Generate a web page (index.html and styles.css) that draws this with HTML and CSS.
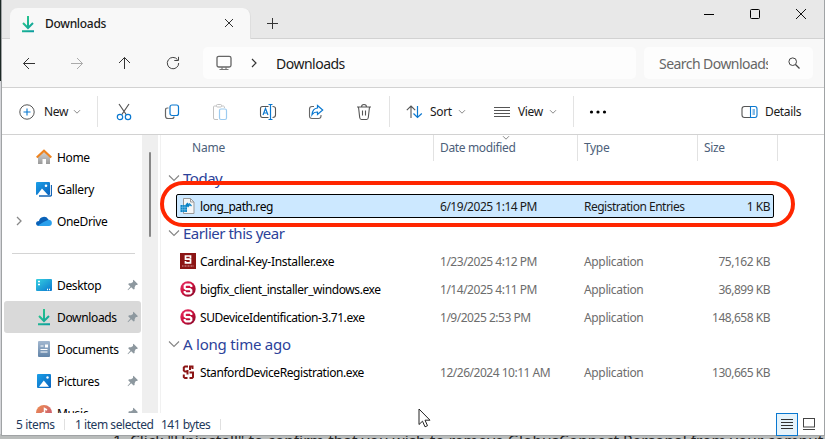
FILE: index.html
```html
<!DOCTYPE html>
<html lang="en">
<head>
<meta charset="utf-8">
<title>Downloads</title>
<link rel="stylesheet" href="styles.css">
</head>
<body>
<svg width="0" height="0" class="defs">
  <defs>
    <linearGradient id="dl" x1="0" y1="0" x2="1" y2="1"><stop offset="0" stop-color="#2fcf87"/><stop offset="1" stop-color="#0b9ba0"/></linearGradient>
    <linearGradient id="blue" x1="0" y1="0" x2="1" y2="1"><stop offset="0" stop-color="#1aa0e8"/><stop offset="1" stop-color="#0a62bd"/></linearGradient>
    <linearGradient id="desk" x1="0" y1="0" x2="1" y2="1"><stop offset="0" stop-color="#35d0e0"/><stop offset="1" stop-color="#0b78d0"/></linearGradient>
    <linearGradient id="doc" x1="0" y1="0" x2="0" y2="1"><stop offset="0" stop-color="#a3b8d0"/><stop offset="1" stop-color="#6284a8"/></linearGradient>
    <linearGradient id="mus" x1="0" y1="0" x2="1" y2="1"><stop offset="0" stop-color="#f09050"/><stop offset="1" stop-color="#c05078"/></linearGradient>
    <linearGradient id="wall" x1="0" y1="0" x2="0" y2="1"><stop offset="0" stop-color="#d8d8d8"/><stop offset="1" stop-color="#9a9a9a"/></linearGradient>
    <linearGradient id="badge" x1="0" y1="0" x2="1" y2="1"><stop offset="0" stop-color="#f03068"/><stop offset=".5" stop-color="#c8103c"/><stop offset="1" stop-color="#800828"/></linearGradient>
    <symbol id="arrow-down" viewBox="0 0 16 18"><path d="M7 1V13M2 8L7 13L12 8M1 16.3H13" fill="none" stroke="url(#dl)" stroke-width="2"/></symbol>
    <symbol id="chev" viewBox="0 0 8 6"><path d="M1 1.2L4 4.2L7 1.2" fill="none" stroke="#8a8a8a" stroke-width="1"/></symbol>
    <symbol id="fold" viewBox="0 0 12 8"><path d="M1 1.5L6 6.5L11 1.5" fill="none" stroke="#858585" stroke-width="1.1"/></symbol>
    <symbol id="pin" viewBox="0 0 12 12"><path d="M6.5 .8L11 5.2L9.8 6L8.8 6L7.6 8.2V10L6.6 10.6L4.2 8.3L1 11.2L.6 10.8L3.4 7.5L1.2 5.2L2 4.3H4L6 3V1.6Z" fill="#8d989f"/></symbol>
    <symbol id="seal" viewBox="0 0 16 16"><circle cx="8" cy="8" r="7.7" fill="url(#badge)"/><path d="M11.3 6V4.7L10 3.6H6L4.7 4.7V7L6 8.2H10L11.3 9.3V11.2L10 12.4H6L4.7 11.2V9.9" fill="none" stroke="#fff" stroke-width="2.2"/></symbol>
  </defs>
</svg>
<div class="backdrop">
<main class="window">
  <header class="titlebar">
    <div class="tab">
      <svg class="tab-icon" width="16" height="18"><use href="#arrow-down"/></svg>
      <span class="tab-label">Downloads</span>
      <svg class="tab-close" width="10" height="10" viewBox="0 0 10 10"><path d="M1 1L9 9M9 1L1 9" stroke="#333" fill="none"/></svg>
    </div>
    <svg class="tab-add" width="11" height="11" viewBox="0 0 11 11"><path d="M5.5 0V11M0 5.5H11" stroke="#333" fill="none"/></svg>
    <div class="controls">
      <svg width="12" height="12" viewBox="0 0 12 12"><path d="M1 6.5H11" stroke="#000"/></svg>
      <svg width="12" height="12" viewBox="0 0 12 12"><rect x="1.5" y="1.5" width="9" height="9" rx="1" fill="none" stroke="#000"/></svg>
      <svg width="12" height="12" viewBox="0 0 12 12"><path d="M1 1L11 11M11 1L1 11" stroke="#111"/></svg>
    </div>
  </header>

  <nav class="navbar">
    <svg width="14" height="14" viewBox="0 0 14 14"><path d="M13 7.500H1.500M7 2L1.500 7.500L7 13" stroke="#333" fill="none"/></svg>
    <svg width="14" height="14" viewBox="0 0 14 14"><path d="M1 7.500H12.500M7 2L12.500 7.500L7 13" stroke="#aaa" fill="none"/></svg>
    <svg width="14" height="14" viewBox="0 0 14 14"><path d="M6.500 13V1.500M1 7L6.500 1.500L12 7" stroke="#333" fill="none"/></svg>
    <svg width="14" height="14" viewBox="0 0 14 14"><path d="M11.500 3.600A5.700 5.700 0 1 0 12.700 7M8.300 4.500H12.500V.8" stroke="#444" fill="none"/></svg>
    <div class="address">
      <svg width="16" height="16" viewBox="0 0 16 16"><rect x="1" y="1.300" width="14" height="10.700" rx="1.800" fill="none" stroke="#666" stroke-width="1.300"/><path d="M6 12V14M10 12V14M3.500 14.500H12.500" stroke="#777" stroke-width="1.200"/></svg>
      <svg class="crumb" width="6" height="10" viewBox="0 0 6 10"><path d="M1 1L5 5L1 9" fill="none" stroke="#333" stroke-width="1.200"/></svg>
      <span>Downloads</span>
    </div>
    <div class="search">
      <span>Search Downloads</span>
      <svg width="12" height="12" viewBox="0 0 12 12"><circle cx="4.700" cy="4.700" r="3.800" fill="none" stroke="#444"/><path d="M7.500 7.500L11.500 11.500" stroke="#444" stroke-width="1.200"/></svg>
    </div>
  </nav>

  <div class="toolbar">
    <svg width="16" height="16" viewBox="0 0 16 16"><circle cx="8" cy="8" r="7.200" fill="none" stroke="#555"/><path d="M8 4.500V11.500M4.500 8H11.500" stroke="#0a78d0" stroke-width="1.100"/></svg>
    <span>New</span>
    <svg class="drop" width="8" height="6"><use href="#chev"/></svg>
    <i class="rule"></i>
    <div class="actions">
      <svg width="16" height="18" viewBox="0 0 16 18"><path d="M3 1L10.500 12M13 1L5.500 12" stroke="#555" fill="none" stroke-width="1.200"/><circle cx="4" cy="14" r="2.700" fill="#fff" stroke="#0a78d0" stroke-width="1.200"/><circle cx="12" cy="14" r="2.700" fill="#fff" stroke="#0a78d0" stroke-width="1.200"/></svg>
      <svg width="16" height="18" viewBox="0 0 16 18"><path d="M4.500 5H3.500Q1.500 5 1.500 7V13Q1.500 15.500 4 15.500H8Q10 15.500 10 13.500" fill="none" stroke="#666" stroke-width="1.200"/><rect x="6" y="2" width="8.500" height="10.500" rx="2" fill="#fff" stroke="#0a78d0" stroke-width="1.200"/></svg>
      <svg width="16" height="18" viewBox="0 0 16 18"><path d="M4.500 3H2.500Q1.500 3 1.500 4V15Q1.500 16.500 3 16.500H6M9.500 3H11.500Q12.500 3 12.500 5" fill="none" stroke="#c2c2c2"/><rect x="4.500" y="1.500" width="5" height="2.500" rx="1" fill="none" stroke="#c2c2c2"/><rect x="7.500" y="6" width="7" height="10.500" rx="1.500" fill="#fff" stroke="#9ccbf0" stroke-width="1.200"/></svg>
      <svg width="18" height="18" viewBox="0 0 18 18"><path d="M9.500 3.500H3.500Q1.500 3.500 1.500 5.500V12Q1.500 14.500 3.500 14.500H9.500M13.500 3.500Q16.500 3.500 16.500 5.500V12Q16.500 14.500 13.500 14.500" fill="none" stroke="#555" stroke-width="1.100"/><path d="M4 12L6.500 5.500L9 12M4.800 10H8.200M11.500 1.500V16.500M9.500 1.500H13.500M9.500 16.500H13.500" stroke="#0a78d0" stroke-width="1.200" fill="none"/></svg>
      <svg width="16" height="18" viewBox="0 0 16 18"><path d="M6 3.500H4Q1.500 3.500 1.500 6V13Q1.500 15.500 4 15.500H10.500Q13 15.500 13 13V12" fill="none" stroke="#666" stroke-width="1.100"/><path d="M9.500 2.500L14.700 7L9.500 11.500V9Q6 8.800 4 11.700Q4.500 5.500 9.500 5Z" fill="#fff" stroke="#0a78d0" stroke-width="1.200"/></svg>
      <svg width="16" height="18" viewBox="0 0 16 18"><path d="M1 4H15M5.500 4Q5.500 1.500 8 1.500Q10.500 1.500 10.500 4M2.500 4L3.700 14.500Q3.900 16.500 5.500 16.500H10.500Q12.100 16.500 12.300 14.500L13.500 4M6.500 7.500V12.500M9.500 7.500V12.500" stroke="#555" fill="none" stroke-width="1.100"/></svg>
    </div>
    <i class="rule rule-b"></i>
    <svg class="sort-icon" width="17" height="16" viewBox="0 0 17 16"><path d="M5 14V2M.800 6.200L5 2L9.200 6.200" stroke="#555" fill="none" stroke-width="1.100"/><path d="M11.500 2V13.500M7.500 9.500L11.500 13.500L15.800 9.500" stroke="#0a78d0" fill="none" stroke-width="1.200"/></svg>
    <span class="sort">Sort</span>
    <svg class="drop drop-b" width="8" height="6"><use href="#chev"/></svg>
    <svg class="view-icon" width="16" height="12" viewBox="0 0 16 12"><path d="M0 1.500H16M0 4.500H16M0 7.500H16M0 10.500H16" stroke="#555"/></svg>
    <span class="view">View</span>
    <svg class="drop drop-c" width="8" height="6"><use href="#chev"/></svg>
    <i class="rule rule-c"></i>
    <svg class="more" width="18" height="4" viewBox="0 0 18 4"><circle cx="2.500" cy="2" r="1.600"/><circle cx="9" cy="2" r="1.600"/><circle cx="15.500" cy="2" r="1.600"/></svg>
    <svg class="details-icon" width="17" height="14" viewBox="0 0 17 14"><path d="M10 1.500H3.500Q1 1.500 1 4V10Q1 12.500 3.500 12.500H10" stroke="#555" fill="none" stroke-width="1.100"/><path d="M9.500 1.500H14Q16 1.500 16 4V10Q16 12.500 14 12.500H9.500ZM11.500 5H14M11.500 7H14M11.500 9H14" stroke="#0a78d0" fill="none" stroke-width="1.100"/></svg>
    <span class="details">Details</span>
  </div>

  <div class="body">
    <aside class="side">
      <div class="place"><svg width="16" height="16" viewBox="0 0 16 16"><path d="M2 7L8 1.500L14 7V15H10V10H6.500V15H2Z" fill="url(#wall)"/><path d="M.700 8.500L8 1.800L15.300 8.500" fill="none" stroke="#ef8420" stroke-width="2.200"/></svg><span>Home</span></div>
      <div class="place"><svg width="16" height="16" viewBox="0 0 16 16"><path d="M3 15H14.500Q15.500 15 15.500 14V4" fill="none" stroke="#1565b5" stroke-width="1.300"/><rect x="0" y="1" width="14" height="13" rx="1" fill="url(#blue)"/><path d="M1 14L6 7.500L12 14Z" fill="#fff"/><circle cx="10" cy="4.700" r="1.300" fill="#fff"/></svg><span>Gallery</span></div>
      <div class="place drive"><svg class="expand" width="6" height="10" viewBox="0 0 6 10"><path d="M1 1L5 5L1 9" fill="none" stroke="#888" stroke-width="1.300"/></svg><svg width="16" height="16" viewBox="0 0 16 16"><path d="M3 8A5 5 0 0 1 12.200 6.300L14 9L6 13H3A3 3 0 0 1 0 10Q.300 8.200 3 8Z" fill="#0a62b8"/><path d="M2 12.600L7.500 9L12.500 6.800A3.500 3.500 0 0 1 15.900 10Q15.800 13 13 13H3Z" fill="#2aa0ec"/></svg><span>OneDrive</span></div>
      <div class="split"></div>
      <div class="place"><svg width="16" height="16" viewBox="0 0 16 16"><rect y="2" width="16" height="12" rx="1" fill="url(#desk)"/><path d="M2 4.500H4M2 7.500H4M11 12.500H12M13 12.500H14" stroke="#fff" stroke-width="1.300"/></svg><span>Desktop</span><svg class="pin" width="12" height="12"><use href="#pin"/></svg></div>
      <div class="place current"><svg width="16" height="18"><use href="#arrow-down" x="1"/></svg><span>Downloads</span><svg class="pin" width="12" height="12"><use href="#pin"/></svg></div>
      <div class="place"><svg width="16" height="16" viewBox="0 0 16 16"><rect x="2" width="12" height="16" rx="1" fill="url(#doc)"/><path d="M4.500 5H7.500M4.500 8.500H11.500M4.500 11H11.500" stroke="#fff" stroke-width="1.100"/><rect x="9" y="3.500" width="3" height="3" fill="#fff"/></svg><span>Documents</span><svg class="pin" width="12" height="12"><use href="#pin"/></svg></div>
      <div class="place"><svg width="16" height="16" viewBox="0 0 16 16"><rect x="1" y="1" width="14" height="14" rx="1" fill="url(#blue)"/><path d="M3 13.700L7.800 7.500L13 13.700Z" fill="#fff"/><circle cx="11.500" cy="4.500" r="1.200" fill="#fff"/></svg><span>Pictures</span><svg class="pin" width="12" height="12"><use href="#pin"/></svg></div>
      <div class="place"><svg width="16" height="16" viewBox="0 0 16 16"><circle cx="8" cy="8" r="8" fill="url(#mus)"/><path d="M8.500 9V3.500L11 5M8.500 8Q6 7 6 9.500" stroke="#fff" stroke-width="1.500" fill="none"/></svg><span>Music</span><svg class="pin" width="12" height="12"><use href="#pin"/></svg></div>
    </aside>
    <div class="scroll"><div class="thumb"></div></div>
    <section class="files">
      <div class="columns">
        <span class="c-name">Name</span><span class="c-date">Date modified<svg class="order" width="8" height="6"><use href="#chev"/></svg></span><span class="c-type">Type</span><span class="c-size">Size</span>
      </div>
      <div class="group"><svg width="12" height="8"><use href="#fold"/></svg><span>Today</span></div>
      <div class="file selected"><svg width="16" height="16" viewBox="0 0 16 16"><path d="M3.500 .500H10.500L14 4V15.500H3.500Z" fill="#f6f6f6" stroke="#999"/><path d="M10.500 .500V4H14" fill="none" stroke="#999"/><path d="M.500 7H7V14H.500Z" fill="#0a82c4"/><path d="M2.700 7V14M4.900 7V14M.500 9.300H7M.500 11.700H7" stroke="#8fd0f0" stroke-width=".5"/><path d="M5.500 6.500L7.500 4.500L10 7.500L8 9.500Z" fill="#0a82c4"/><path d="M9 5.500L11.500 8" stroke="#0a82c4" stroke-width="1.300"/></svg><span>long_path.reg</span><span>6/19/2025 1:14 PM</span><span>Registration Entries</span><span>1 KB</span></div>
      <div class="group"><svg width="12" height="8"><use href="#fold"/></svg><span>Earlier this year</span></div>
      <div class="file"><svg width="16" height="16" viewBox="0 0 16 16"><rect width="16" height="16" fill="#8c1515"/><path d="M10.500 5V3H5.500V6.200H10.500V9.800H5.500V8" fill="none" stroke="#fff" stroke-width="1.700"/><path d="M2 13H14" stroke="#d8a0a0" stroke-dasharray="1 .5"/></svg><span class="wide">Cardinal-Key-Installer.exe</span><span>1/23/2025 4:12 PM</span><span>Application</span><span>75,162 KB</span></div>
      <div class="file"><svg width="16" height="16"><use href="#seal"/></svg><span>bigfix_client_installer_windows.exe</span><span>1/14/2025 4:11 PM</span><span>Application</span><span>36,899 KB</span></div>
      <div class="file"><svg width="16" height="16"><use href="#seal"/></svg><span>SUDeviceIdentification-3.71.exe</span><span>1/9/2025 2:53 PM</span><span>Application</span><span>148,658 KB</span></div>
      <div class="group"><svg width="12" height="8"><use href="#fold"/></svg><span class="wide">A long time ago</span></div>
      <div class="file"><svg width="16" height="16" viewBox="0 0 16 16"><path d="M12.500 5V2.500H10V6M8 2.500H5L3.800 3.500V6.500L5 7.500H7.500M9.500 8.500H13V13L12 14H9.500M7.500 14H5L3.800 13V10.500M7.500 6V10.500" fill="none" stroke="#8c1515" stroke-width="2"/></svg><span>StanfordDeviceRegistration.exe</span><span>12/26/2024 10:11 AM</span><span>Application</span><span>130,665 KB</span></div>
    </section>
  </div>

  <footer class="status">
    <span class="s1">5 items</span><i></i><span class="s2">1 item selected</span><span class="s3">141 bytes</span><i></i>
    <div class="modes">
      <div class="mode on"><svg width="12" height="12" viewBox="0 0 12 12"><path d="M0 1.500H12M0 4.500H12M0 7.500H12M0 10.500H12" stroke="#333"/></svg></div>
      <div class="mode"><svg width="12" height="12" viewBox="0 0 12 12"><rect x=".5" y=".5" width="11" height="8.500" fill="none" stroke="#444"/><path d="M0 11.500H12" stroke="#444"/></svg></div>
    </div>
  </footer>
  <div class="ring"></div>
  <svg class="cursor" width="14" height="20" viewBox="0 0 14 20"><path d="M1 1V16.500L4.500 13.200L7 18.800L9.500 17.700L7 12.200H12Z" fill="#fff" stroke="#222"/></svg>
</main>
<p class="behind">1. Click "Uninstall" to confirm that you wish to remove GlobusConnect Personal from your computer.</p>
</div>
</body>
</html>
```

FILE: styles.css
```css
* { box-sizing: border-box; }
body { margin: 0; font: 12px/16px "Noto Sans", "Open Sans", sans-serif; color: #1a1a1a; overflow: hidden; }
svg { display: block; flex: none; }
span { white-space: nowrap; }
.defs { position: absolute; }
.backdrop { height: 439px; width: 825px; padding-left: 1px; overflow: hidden; background: linear-gradient(#1d2926 0 81px, #d5d6da 81px 434px, #b9bcbb 434px); }
.window { position: relative; width: 824px; height: 436px; background: #fff; border: 1px solid #a0a3a5; border-top: 0; display: flex; flex-direction: column; }

.titlebar { height: 39px; flex: none; background: #e8e8e8; border-bottom: 1px solid #d2d2d2; display: flex; }
.tab { width: 241px; height: 31px; margin: 8px 0 0 8px; flex: none; background: #f8f8f8; border-radius: 8px 8px 0 0; display: flex; align-items: center; padding-left: 11px; border-right: 1px solid #dedede; }
.tab-label { width: 180px; margin-left: 8px; font-weight: 500; letter-spacing: -.3px; }
.tab-close { margin: -1px 0 0 -1px; }
.tab-add { margin: 18px 0 0 16px; }
.controls { margin: 8px 17px 0 auto; display: flex; gap: 34px; }

.navbar { height: 49px; flex: none; background: #f8f8f8; border-bottom: 1px solid #d2d2d2; display: flex; align-items: center; padding-left: 20px; gap: 34px; }
.address { margin-left: -11px; width: 433px; flex: none; height: 32px; border-radius: 5px; background: #fdfdfd; display: flex; align-items: center; padding-left: 13px; font-size: 14px; letter-spacing: -.5px; }
.address span, .search span { padding-top: 1px; }
.crumb { margin: 0 19px; }
.search { margin-left: -26px; width: 169px; flex: none; height: 32px; border-radius: 5px; background: #fdfdfd; display: flex; align-items: center; padding-left: 15px; font-size: 14px; letter-spacing: -.55px; color: #666; }
.search span { width: 109px; overflow: hidden; margin-right: 20px; line-height: 20px; }

.toolbar { height: 47px; flex: none; border-bottom: 1px solid #d2d2d2; display: flex; align-items: center; padding: 1px 0 0 17px; }
.toolbar span { letter-spacing: -.35px; width: 25px; margin-left: 9px; padding-top: 1px; }
.toolbar .drop { margin-left: 4px; }
.rule { width: 1px; height: 31px; background: #e3e3e3; margin-left: 16px; }
.actions { display: grid; grid-template-columns: repeat(6, 48px); justify-items: center; margin-left: 2px; }
.toolbar .rule-b { margin-left: 1px; }
.sort-icon { margin-left: 16px; }
.toolbar .sort { margin-left: 7px; width: 24px; }
.view-icon { margin-left: 28px; }
.toolbar .view { margin-left: 8px; width: 27px; }
.toolbar .rule-c { margin-left: 16px; }
.more { margin-left: 15px; }
.details-icon { margin-left: 134px; }
.toolbar .details { margin-left: 7px; width: 40px; }

.body { height: 278px; flex: none; display: flex; overflow: hidden; }
.side { width: 140px; flex: none; padding: 6px 1px 0 2px; }
.place { height: 32px; display: flex; align-items: center; padding-left: 32px; color: #000; letter-spacing: -.35px; }
.place span { margin-left: 5px; width: 69px; padding-top: 1px; }
.pin { margin-left: 1px; }
.drive { padding-left: 12px; }
.expand { margin-right: 14px; }
.split { height: 32px; margin: 0 6px 0 8px; background: linear-gradient(#d4d4d4, #d4d4d4) 0 16px / 100% 1px no-repeat; }
.current { background: #d9d9d9; border-radius: 3px; }
.scroll { width: 16px; background: #efefef; flex: none; padding: 17px 7px 0; }
.thumb { width: 2px; height: 85px; background: #888; border-radius: 1px; }
.files { flex: 1; margin-left: 2px; border-left: 1px solid #f1f1f1; }
.columns { display: grid; grid-template-columns: 273px 144px 120px 80px; height: 25px; color: #4c607a; line-height: 26px; margin-bottom: 5px; letter-spacing: -.35px; }
.columns span { border-right: 1px solid #e2e2e2; padding-left: 6px; position: relative; }
.columns .c-name { padding-left: 31px; letter-spacing: -.2px; }
.order { position: absolute; left: 68px; top: 0; }
.group { height: 27px; display: flex; align-items: center; padding-left: 7px; font-size: 15px; color: #2c429a; }
.group span { margin: -2px 0 0 3px; letter-spacing: -.48px; }
.group .wide { letter-spacing: -.22px; }
.group svg { margin-top: -1px; }
.file { height: 28px; margin-left: 15px; width: 598px; display: grid; grid-template-columns: 16px 244px 144px 100px 86px; align-items: center; padding-left: 4px; color: #6d6d6d; letter-spacing: -.48px; }
.file span { padding-top: 2px; }
.file > :nth-child(2) { padding-left: 4px; color: #000; letter-spacing: -.42px; }
.file > .wide { letter-spacing: -.28px !important; }
.file > :nth-child(4) { letter-spacing: -.35px; }
.file > :last-child { text-align: right; }
.file.selected { height: 24px; margin: 2px 0 2px 15px; border: 1px solid #000; border-radius: 2px; background: #cce8ff; color: #1a1a1a; padding-left: 3px; }
.file.selected > :nth-child(4) { letter-spacing: -.5px; }

.status { height: 22px; flex: none; display: flex; align-items: center; padding-left: 14px; color: #1e395b; letter-spacing: -.35px; }
.status span { padding-top: 2px; }
.s1 { width: 48px; }
.status i { width: 1px; height: 11px; background: #e0e0e0; }
.s2 { margin-left: 10px; width: 86px; letter-spacing: -.45px; }
.s3 { width: 59px; letter-spacing: -.5px; }
.modes { margin: 0 4px 0 auto; display: flex; }
.mode { width: 22px; height: 23px; display: grid; place-items: center; }
.on { border: 1px solid #0a78d0; background: #e5f3fb; }
.ring { position: absolute; left: 158px; top: 181px; width: 635px; height: 46px; border: 4px solid #ff2600; border-radius: 23px; }
.cursor { position: absolute; left: 416px; top: 408px; }
.behind { margin: -4px 0 0 112px; font-size: 15.5px; line-height: 18px; white-space: nowrap; color: #222; }
```
